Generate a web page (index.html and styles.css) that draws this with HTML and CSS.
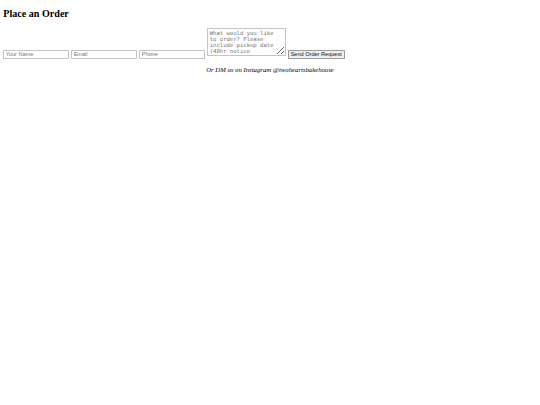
FILE: index.html
```html
<!DOCTYPE html>
<html lang="en">
<head>
<meta charset="utf-8">
<title>Place an Order</title>
<link rel="stylesheet" href="styles.css">
</head>
<body>
<div class="page">
  <h2 class="title">Place an Order</h2>
  <form class="order-form">
    <input class="field" type="text" placeholder="Your Name">
    <input class="field" type="email" placeholder="Email">
    <input class="field" type="tel" placeholder="Phone">
    <textarea class="message" rows="4" placeholder="What would you like to order? Please include pickup date (48hr notice required)"></textarea>
    <button class="submit" type="submit">Send Order Request</button>
  </form>
  <p class="note"><em>Or DM us on Instagram @twoheartsbakehouse</em></p>
</div>
</body>
</html>
```
FILE: styles.css
```css
html, body {
  background: #ffffff;
}
body {
  margin: 0;
  font-family: "Liberation Serif", "Times New Roman", serif;
  color: #000000;
}
.page {
  zoom: 0.42;
  margin: 8px;
  font-size: 16px;
}
.title {
  font-size: 24px;
  font-weight: bold;
  margin: 0.83em 0;
}
.order-form {
  margin: 0;
}
.field {
  box-sizing: border-box;
  width: 157px;
  height: 21px;
  margin: 0 1px 0 0;
  padding: 1px 3px;
  border: 2px solid #c4c4c4;
  border-radius: 1px;
  background: #ffffff;
  font-family: "Liberation Sans", Arial, sans-serif;
  font-size: 13.333px;
  color: #000000;
}
.field::placeholder,
.message::placeholder {
  color: #757575;
}
.message {
  box-sizing: border-box;
  width: 186px;
  height: 68px;
  margin: 0 1px 0 0;
  padding: 2px 17px 2px 3px;
  border: 2px solid #c4c4c4;
  border-radius: 1px;
  font-family: "DejaVu Sans Mono", monospace;
  font-size: 13.333px;
  line-height: 15px;
  overflow: hidden;
}
.submit {
  box-sizing: border-box;
  width: 136px;
  height: 22px;
  padding: 1px 4px;
  border: 2px solid #9a9a9a;
  border-radius: 2px;
  background: #efefef;
  color: #111111;
  font-family: "Liberation Sans", Arial, sans-serif;
  font-size: 13.333px;
}
.note {
  text-align: center;
  margin: 1em 0;
}
```
